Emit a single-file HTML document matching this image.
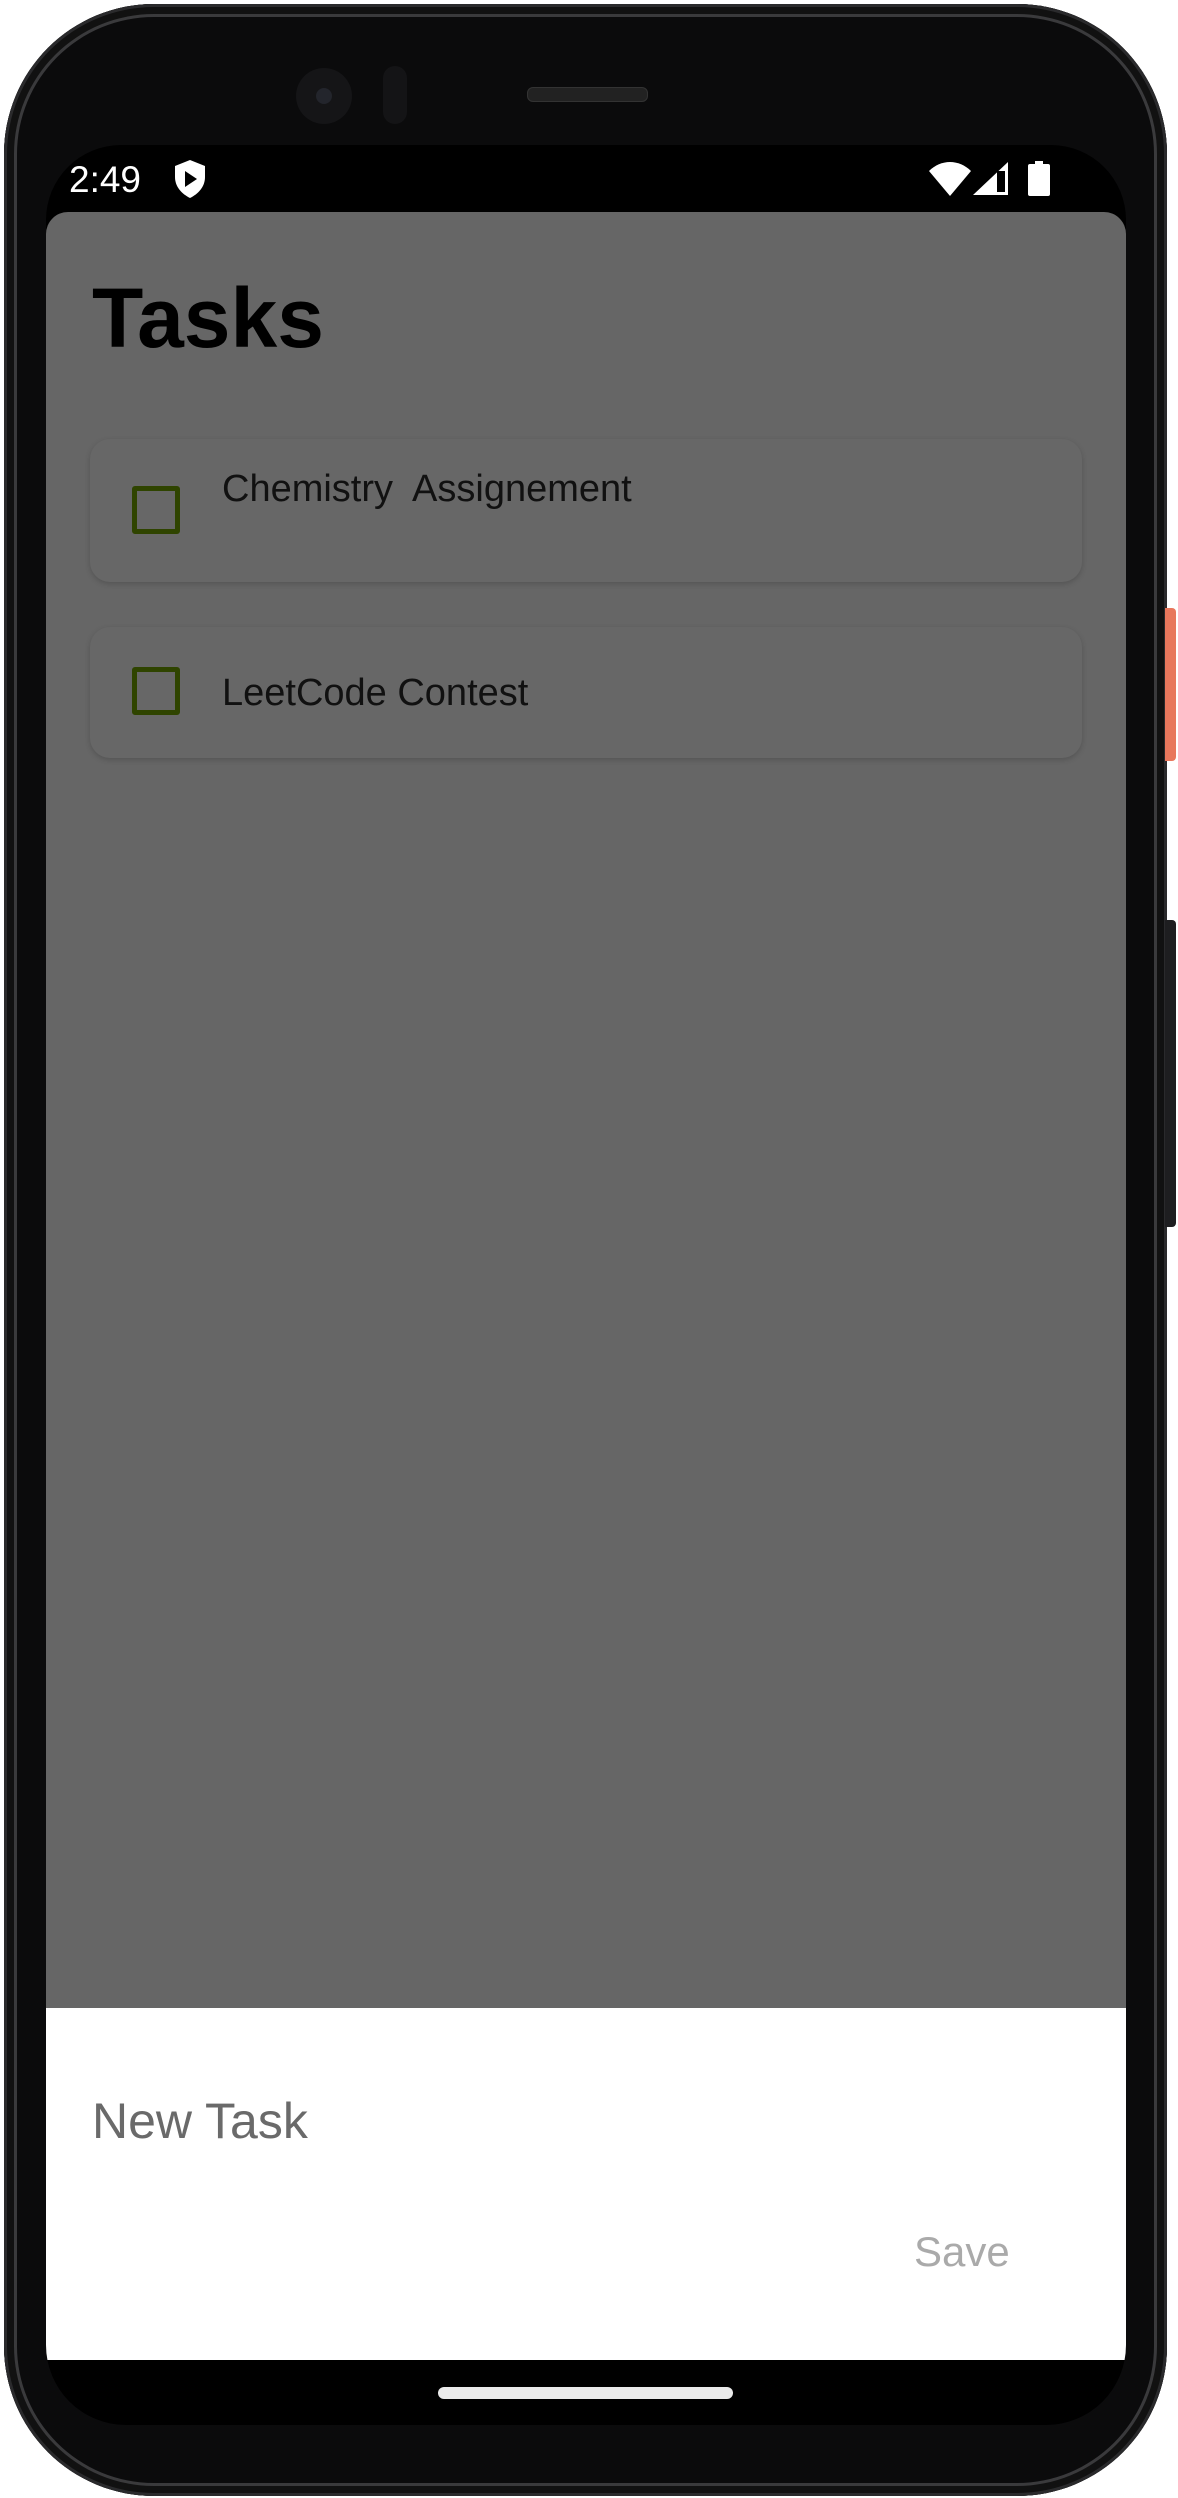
<!DOCTYPE html>
<html><head><meta charset="utf-8"><style>
html,body{margin:0;padding:0;background:#fff;}
body{width:1178px;height:2498px;position:relative;overflow:hidden;font-family:"Liberation Sans",sans-serif;}
.body{position:absolute;left:4px;top:4px;width:1163px;height:2492px;border-radius:150px;background:#0b0b0c;box-shadow:inset 0 0 0 3px #2a2a2c,inset 0 0 0 10px #111,inset 0 0 0 13px #3a3a3c;}
.btn1{position:absolute;left:1165px;top:608px;width:11px;height:153px;background:#e8775c;border-radius:0 4px 4px 0;}
.btn2{position:absolute;left:1165px;top:920px;width:11px;height:307px;background:#1e1e20;border-radius:0 4px 4px 0;}
.screen{position:absolute;left:46px;top:145px;width:1080px;height:2280px;background:#000;border-radius:75px 75px 80px 80px;overflow:hidden;}
.gray{position:absolute;left:0;top:67px;width:1080px;height:1796px;background:#666;border-radius:22px 22px 0 0;}
.white{position:absolute;left:0;top:1863px;width:1080px;height:352px;background:#fff;}
.cam{position:absolute;left:296px;top:68px;width:56px;height:56px;border-radius:50%;background:#151517;}
.cam:after{content:"";position:absolute;left:20px;top:20px;width:16px;height:16px;border-radius:50%;background:#23252c;}
.sensor{position:absolute;left:383px;top:66px;width:24px;height:58px;border-radius:12px;background:#141416;}
.spk{position:absolute;left:527px;top:87px;width:119px;height:13px;border-radius:6px;background:#222;border:1px solid #333;}
.time{position:absolute;left:23px;top:14px;color:#fff;font-size:37px;}
.card{position:absolute;left:44px;width:992px;background:#676767;border-radius:20px;box-shadow:0 2px 6px rgba(0,0,0,.18);}
.cb{position:absolute;left:42px;width:38px;height:38px;border:5px solid #2f4400;border-radius:3px;}
.ct{position:absolute;left:132px;font-size:38px;color:#111;}
</style></head><body>
<div class="body"></div>
<div class="btn1"></div><div class="btn2"></div>
<div class="cam"></div><div class="sensor"></div><div class="spk"></div>
<div class="screen">
  <div class="time">2:49</div>
  <svg style="position:absolute;left:128px;top:15px" width="32" height="38" viewBox="0 0 32 38"><path d="M16 0 L31 6 V17 C31 27 24 34 16 38 C8 34 1 27 1 17 V6 Z" fill="#fff"/><path d="M11 11 L23 19 L11 27 Z" fill="#000"/></svg>
  <svg style="position:absolute;left:883px;top:17px" width="42" height="34" viewBox="0 0 42 34"><path d="M0 9 C12 -3 30 -3 42 9 L21 34 Z" fill="#fff"/></svg>
  <svg style="position:absolute;left:927px;top:17px" width="36" height="34" viewBox="0 0 36 34"><path d="M35 0 V33 H0 Z" fill="#fff"/><rect x="24" y="9" width="8" height="21" fill="#000"/></svg>
  <svg style="position:absolute;left:982px;top:16px" width="22" height="35" viewBox="0 0 22 35"><rect x="7" y="0" width="8" height="4" fill="#fff"/><rect x="0" y="3" width="22" height="32" rx="2" fill="#fff"/></svg>
  <div class="gray">
    <div style="position:absolute;left:46px;top:58px;font-size:84px;font-weight:bold;color:#000;">Tasks</div>
    <div class="card" style="top:227px;height:143px;"><div class="cb" style="top:47px"></div><div class="ct" style="top:29px">Chemistry&nbsp; Assignement</div></div>
    <div class="card" style="top:415px;height:131px;"><div class="cb" style="top:40px"></div><div class="ct" style="top:45px">LeetCode Contest</div></div>
  </div>
  <div class="white">
    <div style="position:absolute;left:46px;top:84px;font-size:50px;color:#6a6a6a;">New Task</div>
    <div style="position:absolute;left:868px;top:220px;font-size:42px;color:#aaa;">Save</div>
  </div>
  <div style="position:absolute;left:392px;top:2242px;width:295px;height:12px;border-radius:6px;background:#eaeaea;"></div>
</div>
</body></html>
